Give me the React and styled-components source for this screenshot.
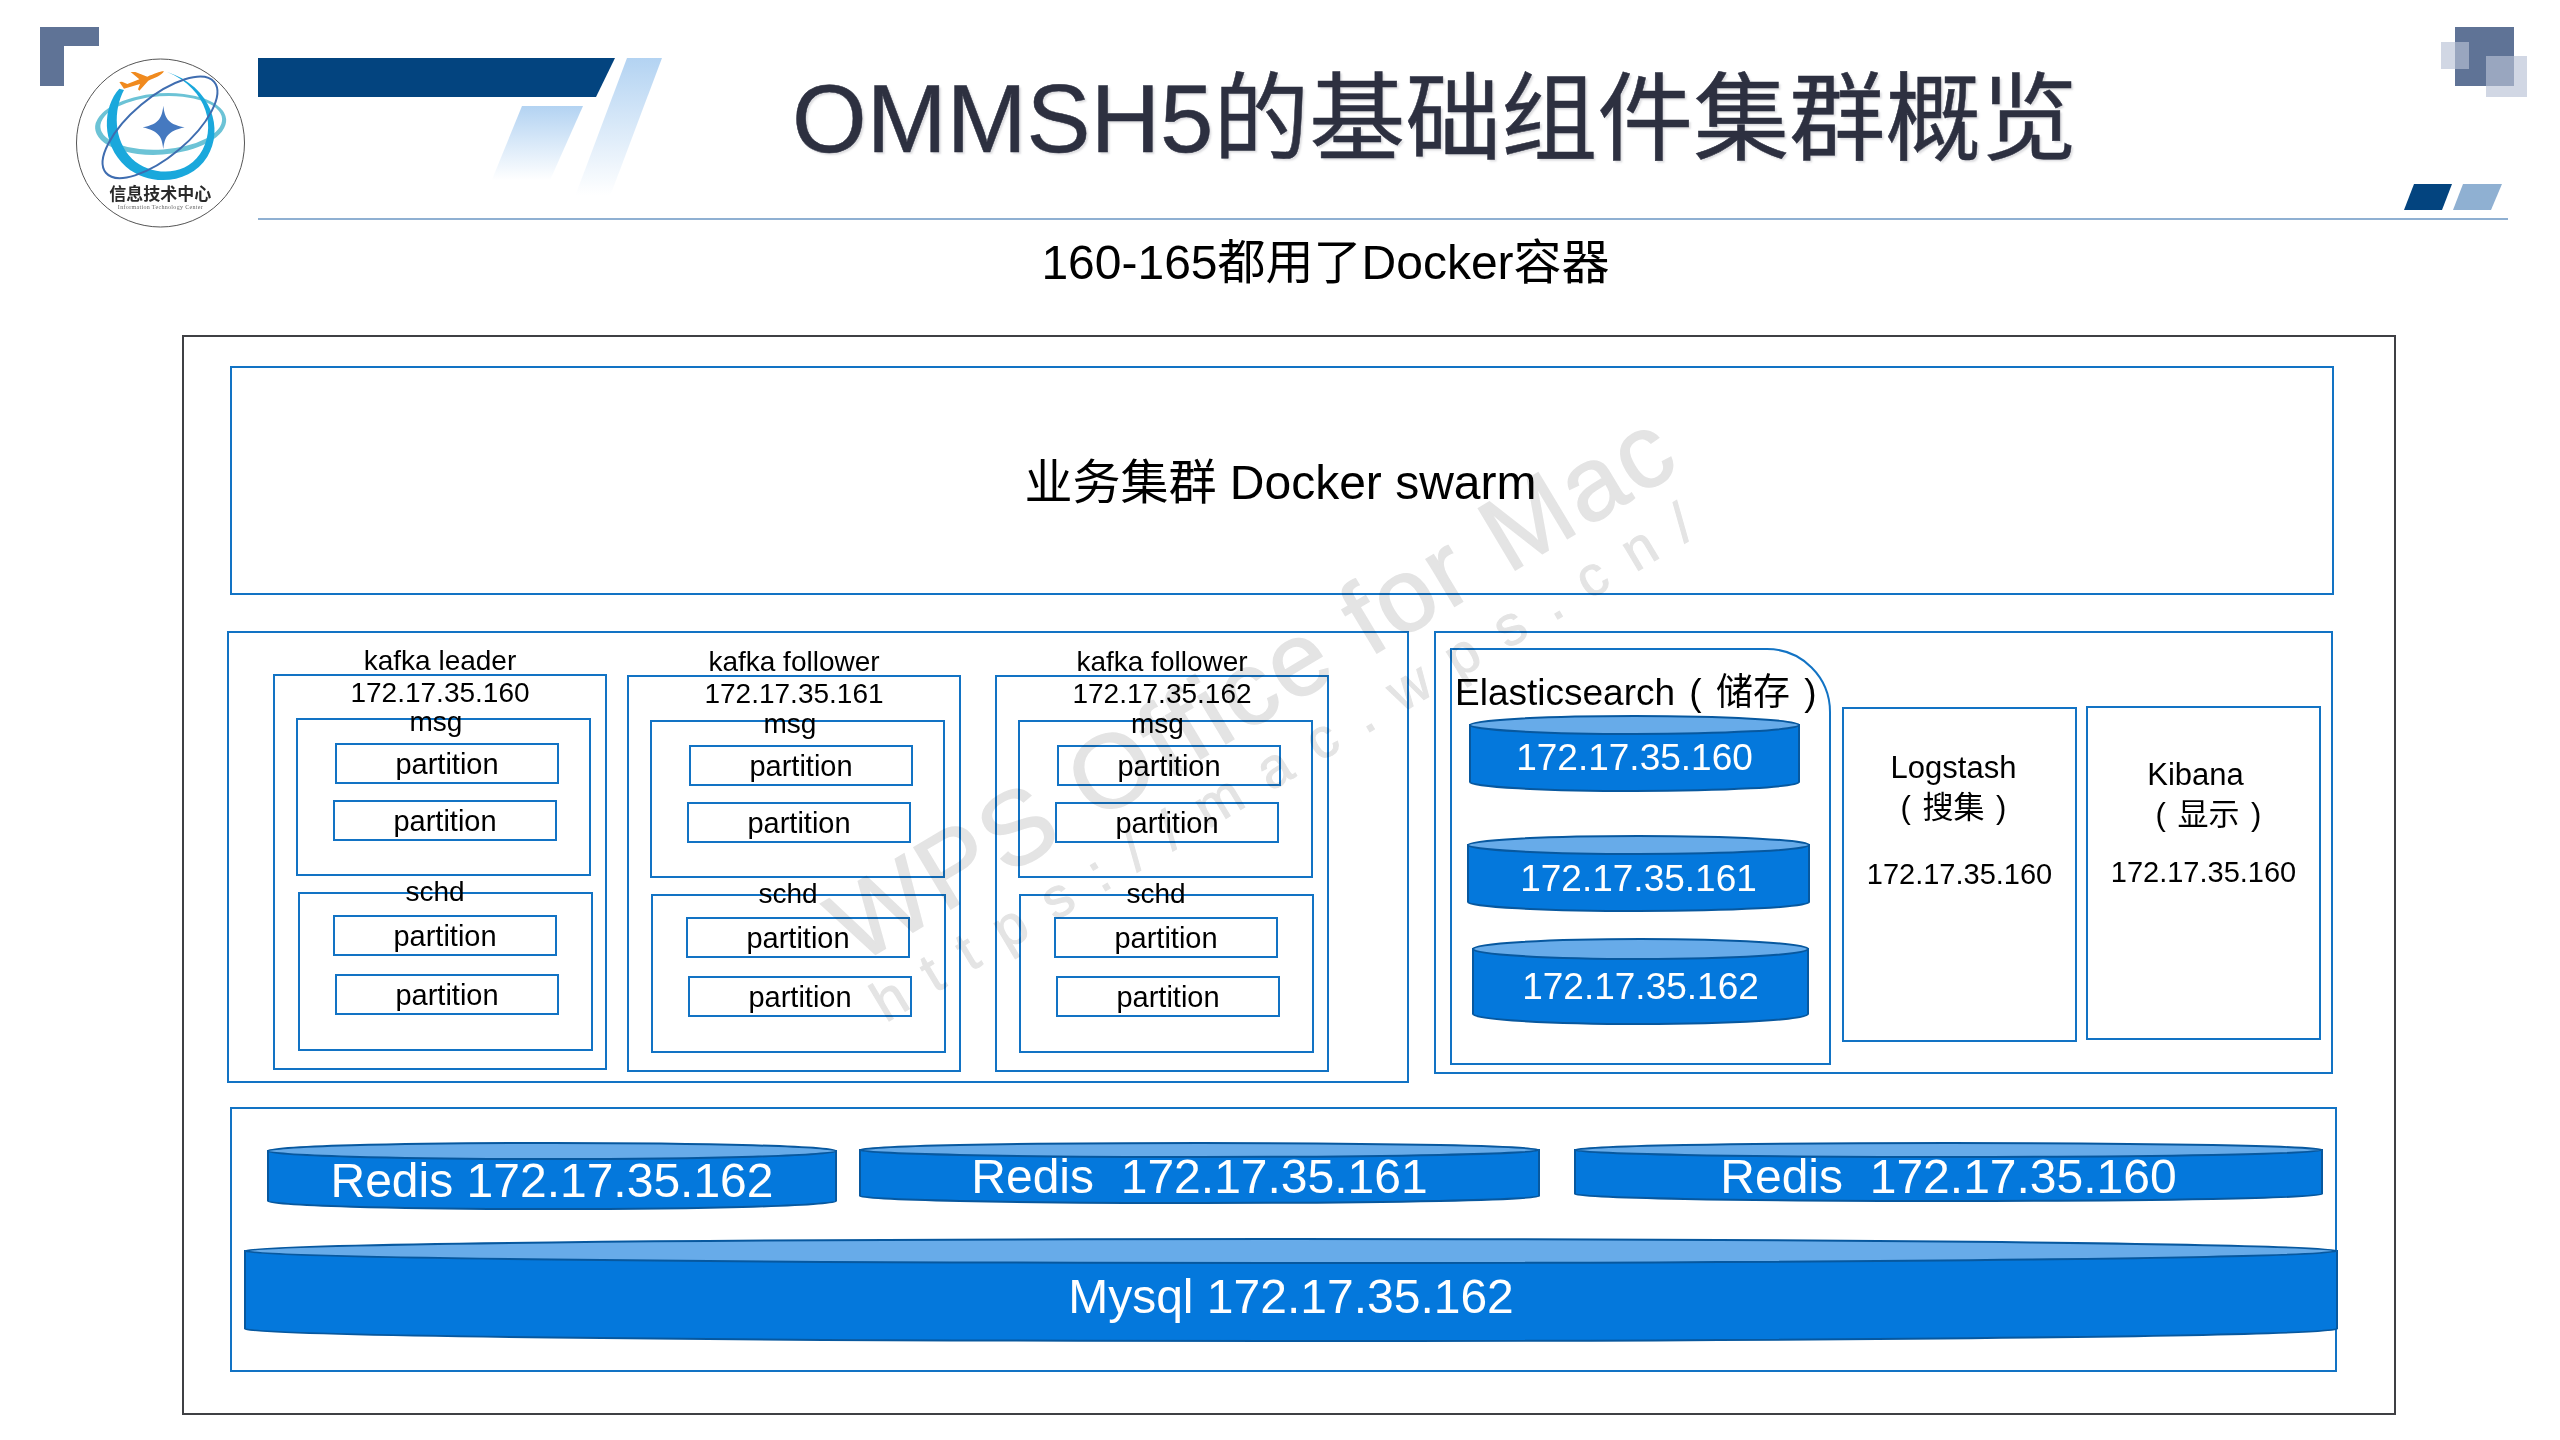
import styled, { createGlobalStyle } from "styled-components";

const LINE = "#1273c4";
const FONT = `"Liberation Sans", "Noto Sans CJK SC", sans-serif`;

const GlobalStyle = createGlobalStyle`
  html, body {
    margin: 0;
    background: #ffffff;
  }
  * {
    box-sizing: border-box;
  }
`;

const Slide = styled.div`
  position: relative;
  width: 2560px;
  height: 1440px;
  overflow: hidden;
  background: #ffffff;
  color: #000000;
  font-family: ${FONT};
`;

const Header = styled.header`
  display: flex;
  align-items: flex-start;
  height: 218px;
  padding-left: 40px;
  padding-right: 33px;
`;

const LogoSvg = styled.svg`
  flex: none;
  width: 205px;
  height: 202px;
  margin-top: 27px;
`;

const RibbonSvg = styled.svg`
  flex: none;
  width: 404px;
  height: 149px;
  margin: 58px 0 0 13px;
`;

const Title = styled.h1`
  margin: 71px 0 0 130px;
  font-size: 96px;
  line-height: 95px;
  font-weight: 400;
  white-space: nowrap;
  color: #2d3040;
  -webkit-text-stroke: 0.5px #2d3040;
  text-shadow: 2px 2px 2px rgba(120, 120, 130, 0.25);
`;

const CornerSvg = styled.svg`
  flex: none;
  width: 123px;
  height: 183px;
  margin: 27px 0 0 auto;
`;

const HeaderRule = styled.div`
  width: 2250px;
  height: 2px;
  margin-left: 258px;
  background: #8fb0d2;
`;

const Subtitle = styled.div`
  margin-top: 13px;
  padding-left: 91px;
  font-size: 48px;
  line-height: 60px;
  text-align: center;
`;

const Frame = styled.main`
  display: flex;
  flex-direction: column;
  align-items: flex-start;
  width: 2214px;
  height: 1080px;
  margin: 42px 0 0 182px;
  padding: 29px 0 0 46px;
  border: 2px solid #3f4044;
`;

const SwarmBox = styled.section`
  display: flex;
  align-items: center;
  justify-content: center;
  width: 2104px;
  height: 229px;
  padding: 0 3px 6px 0;
  border: 2px solid ${LINE};
  font-size: 48px;
`;

const ClusterRow = styled.div`
  display: flex;
  align-items: flex-start;
  gap: 25px;
  margin: 36px 0 0 -3px;
`;

const KafkaCluster = styled.section`
  display: flex;
  align-items: flex-start;
  width: 1182px;
  height: 452px;
  padding: 13px 0 0 44px;
  border: 2px solid ${LINE};
`;

const KafkaNode = styled.div`
  flex: none;
  width: 334px;
  margin-left: ${(p) => p.$left}px;
  margin-top: ${(p) => p.$top}px;
  font-size: 28px;
  line-height: 28px;
  text-align: center;
`;

const KafkaTitle = styled.div`
  margin: 1px 0 -1px;
`;

const KafkaBox = styled.div`
  height: ${(p) => p.$height}px;
  padding-top: 3px;
  border: 2px solid ${LINE};
`;

const GroupBox = styled.div`
  width: 295px;
  height: ${(p) => p.$height}px;
  margin-left: ${(p) => p.$left}px;
  margin-top: ${(p) => p.$top}px;
  border: 2px solid ${LINE};
`;

const GroupLabel = styled.div`
  margin-top: ${(p) => p.$top}px;
  margin-bottom: ${(p) => p.$bottom}px;
  padding-right: ${(p) => p.$nudge}px;
`;

const Partition = styled.div`
  width: 224px;
  height: 41px;
  margin-left: ${(p) => p.$left}px;
  margin-bottom: ${(p) => p.$gap}px;
  border: 2px solid ${LINE};
  font-size: 29px;
  line-height: 38px;
`;

const StoreCluster = styled.section`
  display: flex;
  align-items: flex-start;
  width: 899px;
  height: 443px;
  padding-left: 14px;
  border: 2px solid ${LINE};
`;

const ElasticBox = styled.div`
  flex: none;
  width: 381px;
  height: 417px;
  margin: 15px 11px 0 0;
  padding: 23px 0 0 3px;
  border: 2px solid ${LINE};
  border-top-right-radius: 64px;
`;

const ElasticTitle = styled.div`
  margin-bottom: 2px;
  font-size: 37px;
  line-height: 40px;
  word-spacing: 4px;
  white-space: nowrap;
`;

const ServiceBox = styled.div`
  flex: none;
  width: 235px;
  height: ${(p) => p.$height}px;
  margin-top: ${(p) => p.$top}px;
  margin-right: 9px;
  padding-top: ${(p) => p.$pad}px;
  border: 2px solid ${LINE};
  text-align: center;
`;

const ServiceName = styled.div`
  padding-left: ${(p) => p.$nudgeRight || 0}px;
  padding-right: ${(p) => p.$nudgeLeft || 0}px;
  font-size: 31px;
  line-height: 40px;
  word-spacing: 3px;
`;

const ServiceIp = styled.div`
  margin-top: ${(p) => p.$top}px;
  font-size: 29px;
  line-height: 32px;
`;

const DataBox = styled.section`
  width: 2107px;
  height: 265px;
  margin-top: 24px;
  padding: 33px 0 0 12px;
  border: 2px solid ${LINE};
`;

const RedisRow = styled.div`
  display: flex;
  align-items: flex-start;
  height: 68px;
  margin-bottom: 28px;
  padding-left: 23px;
`;

const CylinderWrap = styled.div`
  position: relative;
  flex: none;
  display: flex;
  align-items: center;
  justify-content: center;
  width: ${(p) => p.$w}px;
  height: ${(p) => p.$h}px;
  margin-left: ${(p) => p.$left || 0}px;
  margin-top: ${(p) => p.$top || 0}px;
  padding-top: ${(p) => p.$pad}px;
  color: #ffffff;
  font-size: ${(p) => p.$size}px;
  white-space: pre;
`;

const CylinderSvg = styled.svg`
  position: absolute;
  top: 0;
  left: 0;
`;

const CylinderLabel = styled.span`
  position: relative;
`;

const Watermark = styled.div`
  position: absolute;
  left: ${(p) => p.$x}px;
  top: ${(p) => p.$y}px;
  transform: translate(-50%, -50%) rotate(-31deg);
  font-family: "Liberation Sans", sans-serif;
  font-size: ${(p) => p.$size}px;
  letter-spacing: ${(p) => p.$spacing}px;
  line-height: 1;
  white-space: nowrap;
  color: #e4e4e4;
  -webkit-text-stroke: ${(p) => p.$stroke}px #e4e4e4;
  mix-blend-mode: multiply;
  pointer-events: none;
`;

function Cylinder({ w, h, ry, pad, size = 37, left, top, children }) {
  const rx = w / 2 - 1;
  return (
    <CylinderWrap $w={w} $h={h} $pad={pad} $size={size} $left={left} $top={top}>
      <CylinderSvg width={w} height={h} viewBox={`0 0 ${w} ${h}`}>
        <path
          d={`M1 ${ry} V${h - ry} A${rx} ${ry - 1} 0 0 0 ${w - 1} ${h - ry} V${ry} Z`}
          fill="#0478dc"
          stroke="#07589f"
          strokeWidth="2"
        />
        <ellipse cx={w / 2} cy={ry} rx={rx} ry={ry - 1} fill="#67abe9" stroke="#07589f" strokeWidth="2" />
      </CylinderSvg>
      <CylinderLabel>{children}</CylinderLabel>
    </CylinderWrap>
  );
}

const kafkaNodes = [
  { title: "kafka leader", ip: "172.17.35.160", left: 0, top: 0, height: 396, msgTop: 11, msgNudge: 15, schdNudge: 21, schdLeft: 23 },
  { title: "kafka follower", ip: "172.17.35.161", left: 20, top: 1, height: 397, msgTop: 12, msgNudge: 15, schdNudge: 21, schdLeft: 22 },
  { title: "kafka follower", ip: "172.17.35.162", left: 34, top: 1, height: 397, msgTop: 12, msgNudge: 16, schdNudge: 21, schdLeft: 22 },
];

function Kafka({ node }) {
  return (
    <KafkaNode $left={node.left} $top={node.top}>
      <KafkaTitle>{node.title}</KafkaTitle>
      <KafkaBox $height={node.height}>
        {node.ip}
        <GroupBox $left={21} $top={node.msgTop} $height={158}>
          <GroupLabel $top={-12} $bottom={7} $nudge={node.msgNudge}>msg</GroupLabel>
          <Partition $left={37} $gap={16}>partition</Partition>
          <Partition $left={35} $gap={0}>partition</Partition>
        </GroupBox>
        <GroupBox $left={node.schdLeft} $top={16} $height={159}>
          <GroupLabel $top={-16} $bottom={9} $nudge={node.schdNudge}>schd</GroupLabel>
          <Partition $left={33} $gap={18}>partition</Partition>
          <Partition $left={35} $gap={0}>partition</Partition>
        </GroupBox>
      </KafkaBox>
    </KafkaNode>
  );
}

function Logo() {
  return (
    <LogoSvg viewBox="40 27 205 202" aria-label="信息技术中心">
      <path d="M40 27H99V46H64V86H40Z" fill="#5f7396" />
      <circle cx="160.5" cy="143" r="84" fill="#ffffff" stroke="#555555" strokeWidth="1" />
      <g transform="translate(60 50) scale(0.3333)">
        <path
          fillRule="evenodd"
          d="M105 222a197 92 0 1 0 394 0a197 92 0 1 0 -394 0ZM121 219a183 80 0 1 0 366 0a183 80 0 1 0 -366 0Z"
          fill="#6cc3d6"
          transform="rotate(-4 300 222)"
        />
        <path
          d="M178 116C128 170 122 282 198 350C270 412 392 402 442 320C492 240 458 110 320 65C448 118 470 240 420 312C370 384 270 376 216 326C160 270 160 180 192 120Z"
          fill="#1aa8dc"
        />
        <ellipse cx="300" cy="232" rx="212" ry="88" fill="none" stroke="#3f6db0" strokeWidth="6" transform="rotate(-40 300 232)" />
        <path d="M310 167C314 200 320 222 374 232C320 244 314 264 310 297C306 264 300 244 248 232C300 222 306 200 310 167Z" fill="#4579c0" />
        <path
          d="M312 64C305 76 285 84 265 92L238 122L234 118L240 102L192 116L178 96L186 95L202 102L238 88L212 66L226 66L262 80C282 72 298 64 312 64Z"
          fill="#f08a1e"
        />
        <text x="301" y="450" textAnchor="middle" fontSize="51" fontWeight="700" fill="#2a2a2a" fontFamily="Noto Sans CJK SC, sans-serif">
          信息技术中心
        </text>
        <text x="301" y="476" textAnchor="middle" fontSize="18" textLength="255" fill="#666666" fontFamily="Liberation Serif, serif">
          Information Technology Center
        </text>
      </g>
    </LogoSvg>
  );
}

function Ribbon() {
  return (
    <RibbonSvg viewBox="258 58 404 149">
      <defs>
        <linearGradient id="stripeA" x1="0" y1="0" x2="0" y2="1">
          <stop offset="0" stopColor="#b3d3f2" />
          <stop offset="0.92" stopColor="#ffffff" />
        </linearGradient>
      </defs>
      <path d="M258 58H615L596 97H258Z" fill="#03447f" />
      <path d="M522 106H583L547 187H489Z" fill="url(#stripeA)" />
      <path d="M627 58H662L606 207H571Z" fill="url(#stripeA)" />
    </RibbonSvg>
  );
}

function Corner() {
  return (
    <CornerSvg viewBox="2404 27 123 183">
      <rect x="2455" y="27" width="59" height="59" fill="#5f7396" />
      <rect x="2441" y="42" width="28" height="27" fill="#b9c1d6" fillOpacity="0.65" />
      <rect x="2486" y="56" width="41" height="41" fill="#b9c1d6" fillOpacity="0.65" />
      <path d="M2414 184H2452L2442 210H2404Z" fill="#03447f" />
      <path d="M2463 184H2502L2491 210H2453Z" fill="#8fb0d2" />
    </CornerSvg>
  );
}

export default function App() {
  return (
    <Slide>
      <GlobalStyle />
      <Header>
        <Logo />
        <Ribbon />
        <Title>OMMSH5的基础组件集群概览</Title>
        <Corner />
      </Header>
      <HeaderRule />
      <Subtitle>160-165都用了Docker容器</Subtitle>
      <Frame>
        <SwarmBox>业务集群 Docker swarm</SwarmBox>
        <ClusterRow>
          <KafkaCluster>
            {kafkaNodes.map((node) => (
              <Kafka key={node.ip} node={node} />
            ))}
          </KafkaCluster>
          <StoreCluster>
            <ElasticBox>
              <ElasticTitle>Elasticsearch ( 储存 )</ElasticTitle>
              <Cylinder w={331} h={77} ry={10} pad={8} left={14}>172.17.35.160</Cylinder>
              <Cylinder w={343} h={77} ry={10} pad={10} left={12} top={43}>172.17.35.161</Cylinder>
              <Cylinder w={337} h={87} ry={11} pad={11} left={17} top={26}>172.17.35.162</Cylinder>
            </ElasticBox>
            <ServiceBox $height={335} $top={74} $pad={39}>
              <ServiceName $nudgeLeft={12}>Logstash</ServiceName>
              <ServiceName $nudgeLeft={12}>( 搜集 )</ServiceName>
              <ServiceIp $top={30}>172.17.35.160</ServiceIp>
            </ServiceBox>
            <ServiceBox $height={334} $top={73} $pad={47}>
              <ServiceName $nudgeLeft={16}>Kibana</ServiceName>
              <ServiceName $nudgeRight={10}>( 显示 )</ServiceName>
              <ServiceIp $top={21}>172.17.35.160</ServiceIp>
            </ServiceBox>
          </StoreCluster>
        </ClusterRow>
        <DataBox>
          <RedisRow>
            <Cylinder w={570} h={68} ry={9} pad={8} size={48}>Redis 172.17.35.162</Cylinder>
            <Cylinder w={681} h={62} ry={8} pad={7} size={48} left={22}>Redis  172.17.35.161</Cylinder>
            <Cylinder w={749} h={60} ry={8} pad={9} size={48} left={34}>Redis  172.17.35.160</Cylinder>
          </RedisRow>
          <Cylinder w={2094} h={104} ry={13} pad={12} size={48}>Mysql 172.17.35.162</Cylinder>
        </DataBox>
      </Frame>
      <Watermark $x={1252} $y={686} $size={104} $spacing={3} $stroke={1.5}>WPS Office for Mac</Watermark>
      <Watermark $x={1293} $y={756} $size={56} $spacing={26} $stroke={1}>https://mac.wps.cn/</Watermark>
    </Slide>
  );
}
